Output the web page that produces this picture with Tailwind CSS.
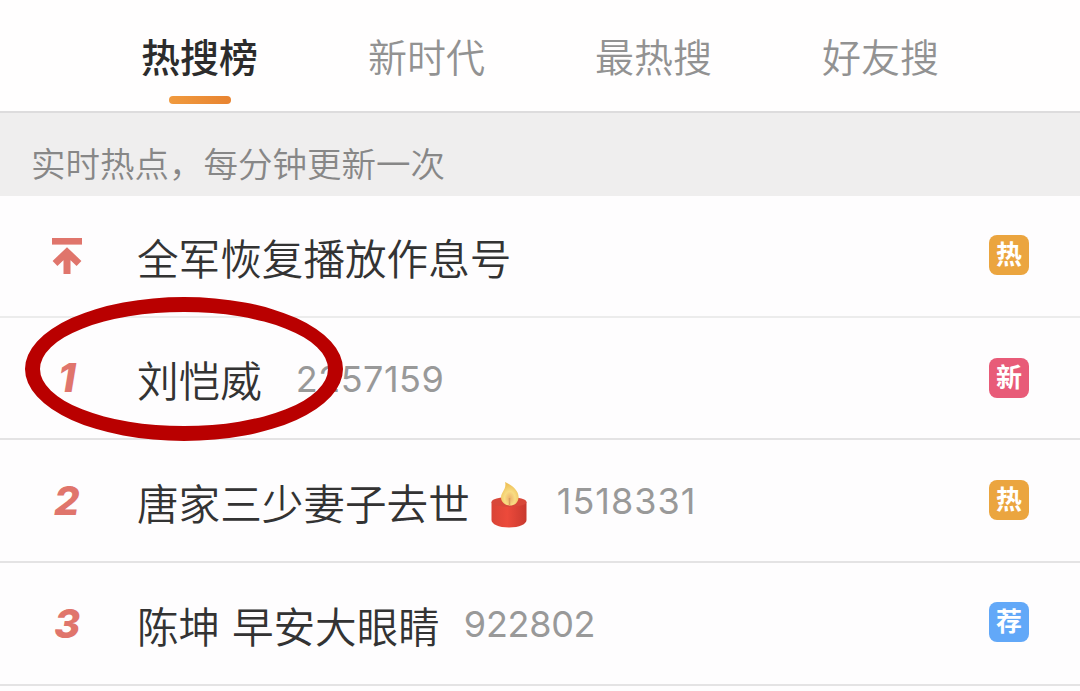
<!DOCTYPE html>
<html lang="zh-CN">
<head>
  <meta charset="UTF-8">
  <title>热搜榜</title>
  <meta name="viewport" content="width=device-width, initial-scale=1.0">
  <script src="https://cdn.jsdelivr.net/npm/@tailwindcss/browser@4"></script>
</head>
<body class="bg-[#fefdfe] font-['Inter','Noto_Sans_CJK_SC',sans-serif] w-[1080px] h-[691px] overflow-hidden">
  <!-- Tabs -->
  <nav class="h-[113px] bg-[#fffefe] border-b-2 border-[#dddcdd] px-[86px] grid grid-cols-4 text-[39px] leading-[56px] font-[350] text-[#929292] text-center whitespace-nowrap">
    <div class="pt-[30px] flex flex-col items-center font-medium text-[#2c2c2c]">
      <span>热搜榜</span>
      <span class="mt-[10px] w-[62px] h-2 rounded-full bg-linear-to-r from-[#f09a3e] to-[#e88330]"></span>
    </div>
    <div class="pt-[30px]">新时代</div>
    <div class="pt-[30px]">最热搜</div>
    <div class="pt-[30px]">好友搜</div>
  </nav>

  <p class="h-[83px] bg-[#efeeee] pl-[31px] pt-[27px] text-[34.5px] leading-[50px] font-[350] text-[#878787] whitespace-nowrap">实时热点，每分钟更新一次</p>

  <!-- Hot list -->
  <ul class="relative text-[41.6px] leading-[60px] font-[350] text-[#333] whitespace-nowrap">
    <li class="h-[122px] border-b-2 border-[#ececec] flex items-center pr-[51px]">
      <span class="w-[137px] pl-[51px] shrink-0">
        <svg class="w-8 h-9" viewBox="0 0 32 36" fill="none" stroke="#e0756c">
          <path d="M1 3.300h30" stroke-width="6.600"/>
          <path d="M16 36V14M4 25.500L16 14l12 11.500" stroke-width="7"/>
        </svg>
      </span>
      <span class="pt-[7px]">全军恢复播放作息号</span>
      <span class="ml-auto mb-0.5 size-10 rounded-lg bg-[#eba53f] text-white text-[26px] leading-[40px] font-bold text-center">热</span>
    </li>
    <li class="h-[122px] border-b-2 border-[#e4e3e4] flex items-center pr-[51px]">
      <span class="w-[137px] pl-[58px] shrink-0 text-[40px] font-extrabold italic text-[#e0756c]">1</span>
      <span class="pt-[7px]">刘恺威</span>
      <span class="ml-[34px] pt-0.5 text-[36px] tracking-[0.5px] font-normal text-[#999]">2257159</span>
      <span class="ml-auto size-10 rounded-lg bg-[#e85b78] text-white text-[26px] leading-[40px] font-bold text-center">新</span>
    </li>
    <li class="h-[123px] border-b-2 border-[#e4e3e4] flex items-center pr-[51px]">
      <span class="w-[137px] pl-[54px] shrink-0 text-[40px] font-extrabold italic text-[#e0756c]">2</span>
      <span class="pt-[9px]">唐家三少妻子去世</span>
      <svg class="ml-[21px] mt-2 w-9 h-[46px]" viewBox="0 0 36 46">
        <defs>
          <linearGradient id="wax" x1="0" x2="1" y1="0" y2="0">
            <stop offset="0" stop-color="#d94436"/>
            <stop offset=".45" stop-color="#ec4a3b"/>
            <stop offset="1" stop-color="#c8392f"/>
          </linearGradient>
          <radialGradient id="flame" cx=".5" cy=".7" r=".6">
            <stop offset="0" stop-color="#eeb26a"/>
            <stop offset=".5" stop-color="#f8dc83"/>
            <stop offset="1" stop-color="#efc25a"/>
          </radialGradient>
        </defs>
        <path d="M0.5 20v18c0 4 7 7.500 17.500 7.500s17.500-3.500 17.500-7.500V20z" fill="url(#wax)"/>
        <ellipse cx="18" cy="20" rx="17.500" ry="5" fill="#d8483a"/>
        <path d="M14 0c7 3 14.500 9 13.500 16-.6 5-4 7.500-8.500 7.500S10 20 10 15.500C10 10 16 7 14 0z" fill="url(#flame)"/>
        <path d="M18.500 16v7" stroke="#d9a060" stroke-width="1.500"/>
      </svg>
      <span class="ml-[30px] pt-px text-[36px] tracking-[1px] font-normal text-[#999]">1518331</span>
      <span class="ml-auto mb-0.5 size-10 rounded-lg bg-[#eba53f] text-white text-[26px] leading-[40px] font-bold text-center">热</span>
    </li>
    <li class="h-[123px] border-b-2 border-[#e4e3e4] flex items-center pr-[51px]">
      <span class="w-[137px] pl-[54px] shrink-0 text-[40px] font-extrabold italic text-[#e0756c]">3</span>
      <span class="pt-[9px]">陈坤 早安大眼睛</span>
      <span class="ml-6 text-[36px] tracking-[-0.3px] font-normal text-[#999]">922802</span>
      <span class="ml-auto mb-[3px] size-10 rounded-lg bg-[#62a8f8] text-white text-[26px] leading-[40px] font-bold text-center">荐</span>
    </li>
    <!-- Marker ring over the first entry -->
    <li class="absolute left-[25px] top-[101px] w-[318px] h-[144px] rounded-[50%] border-[15.5px] border-[#b90000]"></li>
  </ul>
</body>
</html>
